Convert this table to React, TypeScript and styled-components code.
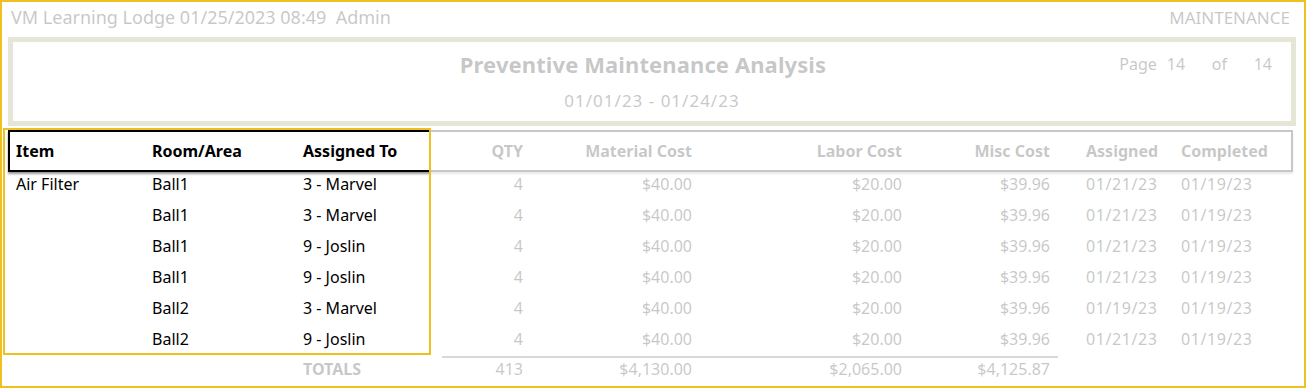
import React from "react";
import styled, { createGlobalStyle } from "styled-components";

const GlobalStyle = createGlobalStyle`
  * { box-sizing: border-box; }
  body {
    margin: 0;
    background: #fff;
    color: #000;
    font-family: "Noto Sans", "Open Sans", sans-serif;
  }
`;

// column widths shared by header, rows and totals
const COLS = "134px 151px 147px 89px 169px 210px 148px 115px 118px";

const Sheet = styled.div`
  width: 1306px;
  height: 388px;
  border: 2px solid #f0c020;
`;

const Stage = styled.div`
  position: relative;
  width: 100%;
  height: 100%;
  overflow: hidden;
`;

const TopBar = styled.div`
  display: flex;
  justify-content: space-between;
  align-items: baseline;
  height: 35px;
  padding: 3px 14px 0 9px;
  line-height: 24px;
`;

const TopText = styled.span<{ $size: number }>`
  font-size: ${(p) => p.$size}px;
  white-space: pre;
`;

const ReportFrame = styled.div`
  margin-left: 6px;
  width: 1288px;
  height: 89px;
  border: 5px solid #8d8d45;
  display: grid;
  grid-template-columns: 1fr auto 1fr;
`;

const TitleBlock = styled.div`
  grid-column: 2;
  display: flex;
  flex-direction: column;
  align-items: center;
`;

const Title = styled.div`
  margin-top: 7px;
  padding-right: 18px;
  font-size: 22px;
  font-weight: 700;
  letter-spacing: 0.1px;
  line-height: 30px;
`;

const DateRange = styled.div`
  margin-top: 9px;
  font-size: 17px;
  letter-spacing: 1px;
  line-height: 26px;
`;

const PageInfo = styled.div`
  grid-column: 3;
  justify-self: end;
  display: flex;
  gap: 10px;
  margin-top: 7px;
  padding-right: 19px;
  font-size: 16px;
  line-height: 30px;
`;

const PageNum = styled.span<{ $right?: boolean }>`
  width: 35px;
  text-align: ${(p) => (p.$right ? "right" : "left")};
`;

const Table = styled.div`
  margin: 4px 0 0 6px;
  width: 1285px;
  font-size: 16px;
`;

const HeaderRow = styled.div`
  display: grid;
  grid-template-columns: ${COLS};
  align-items: center;
  height: 42px;
  border: 2px solid #000;
  box-shadow: 0 2px 2px rgba(0, 0, 0, 0.4);
  font-weight: 700;
`;

const BodyRow = styled.div`
  display: grid;
  grid-template-columns: ${COLS};
  padding: 0 2px 7px;
  line-height: 24px;
`;

const TotalsRow = styled.div`
  display: grid;
  grid-template-columns: ${COLS};
  margin-top: -2px;
  padding: 0 2px;
  line-height: 22px;
`;

const Cell = styled.div<{ $right?: boolean; $inset: number; $spaced?: boolean }>`
  text-align: ${(p) => (p.$right ? "right" : "left")};
  ${(p) => (p.$right ? `padding-right: ${p.$inset}px;` : `padding-left: ${p.$inset}px;`)}
  letter-spacing: ${(p) => (p.$spaced ? "0.6px" : "0")};
  white-space: nowrap;
`;

const TotalCell = styled(Cell)<{ $ruled?: boolean; $bold?: boolean }>`
  border-top: 2px solid ${(p) => (p.$ruled ? "#555" : "transparent")};
  font-weight: ${(p) => (p.$bold ? 700 : 400)};
`;

// lights up the first three columns, dims the rest of the sheet
const Spotlight = styled.div`
  position: absolute;
  left: 1px;
  top: 126px;
  width: 428px;
  height: 227px;
  border: 2px solid #f0c020;
  box-shadow: 0 0 0 2000px rgba(255, 255, 255, 0.78);
  pointer-events: none;
`;

type Col = { label: string; right?: boolean; inset: number; spaced?: boolean };

const columns: Col[] = [
  { label: "Item", inset: 6 },
  { label: "Room/Area", inset: 8 },
  { label: "Assigned To", inset: 8 },
  { label: "QTY", right: true, inset: 8 },
  { label: "Material Cost", right: true, inset: 8 },
  { label: "Labor Cost", right: true, inset: 8 },
  { label: "Misc Cost", right: true, inset: 8 },
  { label: "Assigned", inset: 28, spaced: true },
  { label: "Completed", inset: 8, spaced: true },
];

const rows: string[][] = [
  ["Air Filter", "Ball1", "3 - Marvel", "4", "$40.00", "$20.00", "$39.96", "01/21/23", "01/19/23"],
  ["", "Ball1", "3 - Marvel", "4", "$40.00", "$20.00", "$39.96", "01/21/23", "01/19/23"],
  ["", "Ball1", "9 - Joslin", "4", "$40.00", "$20.00", "$39.96", "01/21/23", "01/19/23"],
  ["", "Ball1", "9 - Joslin", "4", "$40.00", "$20.00", "$39.96", "01/21/23", "01/19/23"],
  ["", "Ball2", "3 - Marvel", "4", "$40.00", "$20.00", "$39.96", "01/19/23", "01/19/23"],
  ["", "Ball2", "9 - Joslin", "4", "$40.00", "$20.00", "$39.96", "01/21/23", "01/19/23"],
];

const totals = ["", "", "TOTALS", "413", "$4,130.00", "$2,065.00", "$4,125.87", "", ""];

const App = () => {
  return (
    <>
      <GlobalStyle />
      <Sheet>
        <Stage>
          <TopBar>
            <TopText $size={18}>VM Learning Lodge 01/25/2023 08:49  Admin</TopText>
            <TopText $size={17}>MAINTENANCE</TopText>
          </TopBar>

          <ReportFrame>
            <TitleBlock>
              <Title>Preventive Maintenance Analysis</Title>
              <DateRange>01/01/23 - 01/24/23</DateRange>
            </TitleBlock>
            <PageInfo>
              <span>Page</span>
              <PageNum>14</PageNum>
              <span>of</span>
              <PageNum $right>14</PageNum>
            </PageInfo>
          </ReportFrame>

          <Table>
            <HeaderRow>
              {columns.map((c) => (
                <Cell key={c.label} $right={c.right} $inset={c.inset}>
                  {c.label}
                </Cell>
              ))}
            </HeaderRow>

            {rows.map((r, i) => (
              <BodyRow key={i}>
                {r.map((v, j) => (
                  <Cell key={j} $right={columns[j].right} $inset={columns[j].inset} $spaced={columns[j].spaced}>
                    {v}
                  </Cell>
                ))}
              </BodyRow>
            ))}

            <TotalsRow>
              {totals.map((v, j) => (
                <TotalCell
                  key={j}
                  $right={columns[j].right}
                  $inset={columns[j].inset}
                  $ruled={j >= 3 && j <= 6}
                  $bold={j === 2}
                >
                  {v}
                </TotalCell>
              ))}
            </TotalsRow>
          </Table>

          <Spotlight />
        </Stage>
      </Sheet>
    </>
  );
};

export default App;
